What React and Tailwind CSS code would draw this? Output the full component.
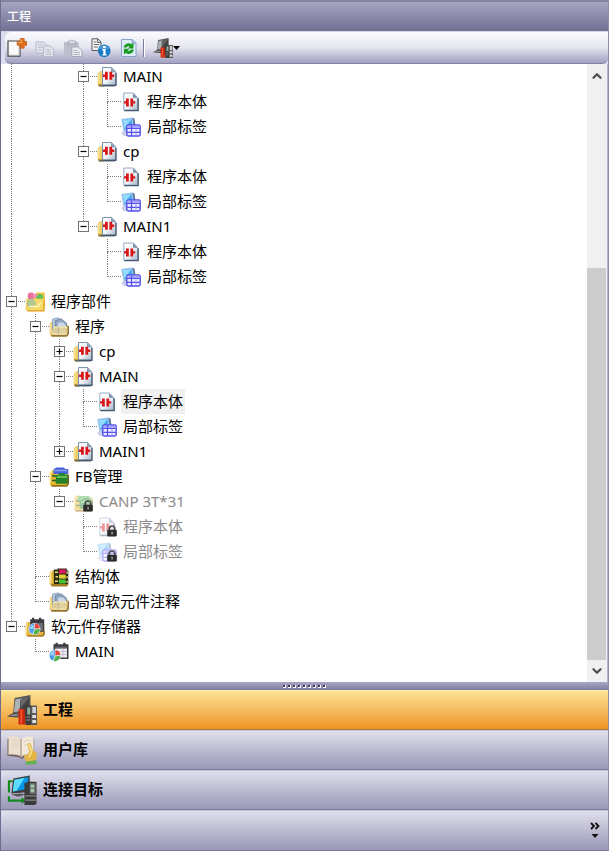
import { ChevronDown, ChevronUp } from "lucide-react";

/* ---------- Icons ---------- */

const Svg = ({ size = "size-5", box = "0 0 20 20", children }) => (
  <svg viewBox={box} className={`${size} shrink-0`} fill="none" aria-hidden="true">
    {children}
  </svg>
);

const Contact = () => (
  <>
    <path d="M0 2.800h2V0h2.800v8H2V5.200H0z" fill="#d81818" />
    <path d="M11.200 2.800h-2V0H6.400v8h2.800V5.200h2z" fill="#d81818" />
  </>
);

const Lock = () => (
  <g>
    <path d="M12.2 13.500v-1.700a2.800 2.800 0 0 1 5.600 0v1.700" stroke="#4a4a4a" strokeWidth="1.600" />
    <rect x="10.200" y="12.800" width="9.600" height="6.700" rx="1.200" fill="#2b2b2b" />
    <path d="M14.200 14.800h1.800v2.600h-1.800z" fill="#8b8b8b" />
  </g>
);

const PageShade = ({ id }) => (
  <defs>
    <linearGradient id={id} x1="0" y1="0" x2="1" y2="1">
      <stop offset="0" stopColor="#ffffff" />
      <stop offset=".55" stopColor="#eef3f8" />
      <stop offset="1" stopColor="#a3b4c6" />
    </linearGradient>
  </defs>
);

const PouIcon = () => (
  <Svg>
    <PageShade id="pou-page" />
    <path d="M1 18.500V7l2-2.500h4V19.500H2z" fill="#c4922a" />
    <path d="M.6 17V7.600L2.600 4.800h3.200v12.400z" fill="#f2cf69" />
    <path d="M1.800 16.500V8l1.300-1.800" stroke="#fbeaa8" />
    <path d="M2 18h17l-1.500 1.600H2.500z" fill="#5f6c74" />
    <path d="M5.500.5h9L18.800 5v13H5.500z" fill="url(#pou-page)" stroke="#6f88a2" strokeWidth=".9" />
    <path d="M14 .6V5.200h4.600z" fill="#8ba0b6" />
    <path d="M6 18.300h13V6" stroke="#43566b" strokeWidth="1.200" />
    <g transform="translate(6 4.800)">
      <Contact />
    </g>
  </Svg>
);

const BodyIcon = ({ locked }) => (
  <Svg>
    <PageShade id="body-page" />
    <g opacity={locked ? 0.45 : 1}>
      <path d="M2.800 1h9.800l4 4.500V18H2.800z" fill="url(#body-page)" stroke="#8ba3bd" strokeWidth=".9" />
      <path d="M12 1.200v4.600h4.600z" fill="#7990a8" />
      <path d="M3.200 18.600h14V6.200" stroke="#44586f" strokeWidth="1.300" />
      <g transform="translate(3 6.400)">
        <Contact />
      </g>
    </g>
    {locked && <Lock />}
  </Svg>
);

const LabelIcon = ({ locked }) => (
  <Svg>
    <g opacity={locked ? 0.45 : 1}>
      <path d="M.3 2 11 .4l2.300 1.400L14.500 10l-10 4.500-2 .5z" fill="#9cc3ee" />
      <path d="m11.400.6 2 1.200L14.600 9h-1.800z" fill="#5d7398" />
      <path d="M1.800 3.200 10.300 2l1.400 7.800-8 2.400z" fill="#45a8ee" />
      <path d="M1.800 3.200 10.300 2 3.600 11.600z" fill="#93dcfb" />
      <path d="M.6 16 4 13.600l2.600 4.600-3.800.2z" fill="#ccd2ea" stroke="#a4add0" strokeWidth=".5" />
      <rect x="5.800" y="8" width="13.400" height="11" rx="1.400" fill="#ecebff" stroke="#5350ee" strokeWidth="1.400" />
      <path d="M6.600 8.700h11.800v2.300H6.600z" fill="#a9a7fb" />
      <path d="M6 11.500h13M6 15.300h13" stroke="#5350ee" strokeWidth="1.200" />
      <path d="M10.500 8.500V19" stroke="#5350ee" strokeWidth="1.200" />
      <path d="M15 11.500V19" stroke="#8d8bf5" strokeWidth=".8" />
    </g>
    {locked && <Lock />}
  </Svg>
);

const PartsIcon = () => (
  <Svg>
    <path d="M11 .5h8.800v13H11z" fill="#f6c443" />
    <path d="M.6 17.500 1.600 6.500h7.400l1.500-2h9.300L19.300 18.800H2z" fill="#efc63e" />
    <circle cx="6" cy="4" r="3.400" fill="#e8709a" />
    <circle cx="10.300" cy="3.800" r="2.400" fill="#ee94b2" />
    <path d="m11 5 3-3.500 4 1.500.5 4-4.500 2.500z" fill="#62bf5c" />
    <path d="M1 8.500h8.500l1.400-1.700h8.300L18.500 19H2.300z" fill="#f7d968" />
    <circle cx="6.200" cy="11.300" r="4.600" fill="#a5c49b" opacity=".85" />
    <path d="M4 14.500h9l3-4" stroke="#fff3b8" strokeWidth="1.400" />
    <path d="M2.300 18.800h16.500L19.500 8" stroke="#e09c1c" strokeWidth="1.200" />
  </Svg>
);

const FilesIcon = () => (
  <Svg>
    <path d="M.8 17V6.800L2.600 4.800H5l1.200 3h12.600V18l-1.500 1.500H2.500z" fill="#c99a35" />
    <path d="M1 17V7l1.800-2H4v13z" fill="#f4d885" />
    <path d="M3.500 2.200 9 .8l3.800 3v12H3.500z" fill="#b9cade" stroke="#8297b2" strokeWidth=".8" />
    <path d="M6.400 3.600 12 1.800l5.400 4.200v10.500h-11z" fill="#91a6c0" stroke="#6a81a0" strokeWidth=".8" />
    <path d="M9 5.500h5l3 3v8H9z" fill="#cbd9e8" />
    <path d="M2 18 4.600 9.500H19L18 18.400z" fill="#e3cf94" opacity=".9" />
    <path d="M5.300 10.200h13M4.200 17h12.500" stroke="#f8edbd" />
    <path d="M9.500 10.500V17" stroke="#b8b69a" />
    <path d="M2.500 18.900h15.300l1.500-2V9" stroke="#806428" strokeWidth="1.200" />
  </Svg>
);

const FbIcon = ({ locked }) => (
  <Svg>
    <g opacity={locked ? 0.45 : 1}>
      <path d="M.8 17V6l2-2.500h3L7.500 5.500h11.700v12.300l-1.600 1.700H2.500z" fill="#e5b52c" />
      <path d="M1.400 16V6.500l1.800-2" stroke="#fbe797" strokeWidth="1.400" />
      {locked ? (
        <path d="M5 4h11l1.500 2v3H5z" fill="#4cb552" />
      ) : (
        <>
          <path d="M4.500 2.200 7.500.4h7.300l1.500 1.600h3V7H4.500z" fill="#4864dc" />
          <path d="M5.500 2.800h12.500v1.400H5.500z" fill="#8aa2f4" />
        </>
      )}
      <path d="M3 9h6M3 13.500h6" stroke="#1e5f2c" strokeWidth="1.500" />
      <path d="M6.800 8h2.400l1.300-1.800h5l1 1.500h3v8l-2 1H6.800z" fill="#23822a" />
      <path d="M8 8.800h10.300v2.200H8z" fill="#63bd54" />
      <path d="M2.500 18.900h15.300l1.500-2V8" stroke="#6d5613" strokeWidth="1.200" />
    </g>
    {locked && <Lock />}
  </Svg>
);

const StructIcon = () => (
  <Svg>
    <path d="M.6 17V5.500l2-2h3v15H2.500z" fill="#e9bb3c" />
    <path d="M1.600 16V6l1.400-1.400" stroke="#fbe797" strokeWidth="1.200" />
    <path d="M2 17h17.200v1l-1.400 1.500H2.500z" fill="#a17b1f" />
    <path d="M4.800 2.500h3.800V1.600h9.200v1.800h1.500V17H4.800z" fill="#2d2b12" />
    <path d="M10 2.400h6.800V6.600H10z" fill="#d91a5e" />
    <path d="M10 7.600h6.800v4H10z" fill="#ded43a" />
    <path d="M10 12.500h6.800v4H10z" fill="#43c433" />
    <path d="M6 4.400h3v1.500H6zM6.500 9h2.500v1.400H6.500zM6 13.600h3v1.500H6zM17.500 4.600h1.300v2.200h-1.300zM17.500 9h1.300v2.200h-1.300zM17.500 14h1.300v1.800h-1.300z" fill="#e9e27c" />
  </Svg>
);

const Pie = () => (
  <>
    <circle cx="6" cy="6" r="6" fill="#e8eef8" />
    <path d="M5.800 6V.6A5.400 5.400 0 0 0 4 11z" fill="#4b9be8" />
    <path d="M5 6V1.400A4.600 4.600 0 0 0 1.500 6z" fill="#9bd2fa" />
    <path d="M6.400 5.800V.6a5.300 5.300 0 0 1 5 4.500z" fill="#ea4636" />
    <path d="m6.200 6.800 5.200-1a5.400 5.400 0 0 1-6.600 5.600z" fill="#4fb54a" />
  </>
);

const MemoryIcon = () => (
  <Svg>
    <path d="M.6 18V7l2-2h3.700l1 2h12v11l-1.500 1.500H2.500z" fill="#e3b23f" />
    <path d="M1.500 17V8l1.500-1.700" stroke="#fbe797" strokeWidth="1.200" />
    <path d="M7 .8h2.200v1.400H14V.8h2.200v1.400h3v12.600H5.200V2.200H7z" fill="#3a3c42" />
    <path d="M7 6h11v8H7z" fill="#686b73" />
    <path d="M2.500 19h15.300l1.400-1.800V14" stroke="#86651d" strokeWidth="1.200" />
    <g transform="translate(3.500 6)">
      <Pie />
    </g>
  </Svg>
);

const MemoryFileIcon = () => (
  <Svg>
    <path d="M6.500.8h2.200v1.400h5.600V.8h2.200v1.400h3V17H4.500V2.200h2z" fill="#3a3c42" />
    <path d="M6.200 6.500H18v9H6.200z" fill="#f1ecf2" />
    <path d="M6.200 9.500H18M6.200 12.500H18M14 6.500v9" stroke="#b4adbc" strokeWidth=".7" />
    <path d="M6.200 5.200H18" stroke="#74777f" />
    <g transform="translate(0 7.600)">
      <Pie />
    </g>
  </Svg>
);

const NewIcon = () => (
  <Svg>
    <path d="M1 3h12v15.200H1z" fill="#fafafa" stroke="#4b4b4b" strokeWidth="1.200" />
    <path d="M2 17.300h10.200V9" stroke="#b0b0b0" />
    <path d="M13.200.5h4v3H20v3.700h-2.800v3h-4v-3h-3V3.500h3z" fill="#e2711d" stroke="#c65008" strokeWidth=".7" />
    <path d="M14.300 1.500v3h-3" stroke="#ffb35b" />
  </Svg>
);

const CopyIcon = () => (
  <Svg>
    <g fill="#e3e3ec" stroke="#b3b3c4" strokeWidth=".9">
      <path d="M1 4h7.500l3 3v8H1z" />
      <path d="M8.500 8H15l3.600 3.400v7.100H8.500z" />
    </g>
    <path d="M3 7h5M3 9.500h4.500M3 12h4M10.500 12h5M10.500 14.300h6M10.500 16.500h6" stroke="#bcbccb" />
  </Svg>
);

const PasteIcon = () => (
  <Svg>
    <path d="M1 4h14.500v14H1z" fill="#bdbdcb" />
    <path d="M5 5.800V3.200h2a2 2 0 0 1 3.600 0h2v2.600z" fill="#dcdce5" stroke="#9c9cb0" strokeWidth=".8" />
    <path d="M8.800 9h6.400l3.800 3.300v6.200H8.800z" fill="#ececf3" stroke="#a4a4b8" strokeWidth=".9" />
    <path d="M10.500 12.500h4.200M10.500 14.500h6.500M10.500 16.600h6.500" stroke="#b3b3c4" />
  </Svg>
);

const InfoIcon = () => (
  <Svg>
    <path d="M1 .8h6L10 4v8.500H1z" fill="#f3f3f3" stroke="#5a5a5a" />
    <path d="M6.700.8v3.600H10" stroke="#5a5a5a" />
    <path d="M2.800 4h2.700M2.800 6.500h5.500M2.800 9h4" stroke="#6c6c6c" />
    <circle cx="13.200" cy="12.800" r="6.400" fill="#1b7bc4" />
    <path d="M8 11a5.500 5.500 0 0 1 10.400 0z" fill="#4a9bd8" />
    <path d="M12 8h2.600v2H12zM11.400 11h3.200v5.200h1v1.300h-4.200v-1.300h.9v-3.800h-.9z" fill="#fff" />
  </Svg>
);

const RefreshIcon = () => (
  <Svg>
    <path d="M2.500 1.500h10.700L17 5v13.500H2.500z" fill="#dfebf8" stroke="#86a4cc" />
    <path d="M13 1.800v3.400h3.800" fill="#b9cde8" stroke="#86a4cc" />
    <path d="M4.600 9.600a5 5 0 0 1 7.900-3.400L14.500 4.800v5.600H9l1.700-1.900a2.500 2.500 0 0 0-3.200 1.100z" fill="#1b9a21" />
    <path d="M14.800 11.600a5 5 0 0 1-7.900 3.400L4.900 16.400v-5.600h5.500l-1.700 1.900a2.500 2.500 0 0 0 3.200-1.100z" fill="#1b9a21" />
  </Svg>
);

const DeviceIcon = ({ size = "size-5" }) => (
  <Svg size={size} box="0 0 30 30">
    <path d="M7.500 3 23.500 0v17L6 19z" fill="#5a5a5a" />
    <path d="M8.500 4.400 15 3.200l-2 13-6.200.8z" fill="#aeb2b6" />
    <path d="M13.500 4.200 22.300 2.200V14l-9.800 3z" fill="#444" />
    <path d="m14 4.200 8.200-2L13.500 13z" fill="#686868" />
    <path d="m0 21.500 6-3.500 8 .5v3.500L9 22.500z" fill="#484848" />
    <path d="m2.500 21 4-2 6.500.3-3.600 2z" fill="#8b8b8b" />
    <path d="M11.500 14h6.800v15.500h-6.800z" fill="#d0260c" />
    <path d="M13.500 14.500h1.600v14h-1.600z" fill="#ee5a38" />
    <path d="m17.500 12 2-1.500h4.700V30h-5.700z" fill="#3c3c3c" />
    <path d="M20.200 12.500h3v7h-3z" fill="#8fae98" />
    <path d="M24 10.500h6V30h-6z" fill="#5a5a5a" />
    <path d="M25.300 12H29v6h-3.700z" fill="#d2d2d2" />
    <path d="M25.300 20H29v3h-3.700zM25.300 25H29v3h-3.700z" fill="#e1e1e1" />
    <path d="M19.500 22h3.500M19.500 25h3.500" stroke="#999" />
  </Svg>
);

const LibraryIcon = () => (
  <Svg size="size-[30px]" box="0 0 31 31">
    <path d="M.5 4.500 3 3v17l10 1.500 2 2 2-2 10-1V3l1 1v18l-10 1-3 2-2-2L.5 21.500z" fill="#75604f" />
    <path d="M1.500 2c5-2 9.500-1 13 2.500V22C11 19.500 7 19 1.500 20.500z" fill="#ecdfd0" />
    <path d="M14.500 4.500C18 1 23 .5 27.500 2v18.500c-5-1.500-8.500-1-13 1.500z" fill="#f3e8dc" />
    <path d="M14.500 4.500V22" stroke="#b39d88" strokeWidth="1.400" />
    <path d="M5 6c2.500-.8 5-.5 7 .5M5 9.500c2.500-.8 5-.5 7 .5M5 13c2.500-.8 5-.5 7 .5M17.500 7c2-1.200 4-1.500 7-1M17.500 11c2-1.200 3-1.500 4-1" stroke="#dccdbd" />
    <path d="M21 9.500c1-1.800 3.500-1.500 4 .5l1.500 5.500 4 2.500.3 6-3.500 4h-7L18 24l-.8-3.500 3 .5L23 17.500z" fill="#e3b646" />
    <path d="m22.500 9.500 3 7.500-2.700 6" stroke="#fae08b" strokeWidth="1.800" />
    <path d="M19.500 27.500 30.500 26v4l-11 .8z" fill="#63b04e" />
  </Svg>
);

const ConnectionIcon = () => (
  <Svg size="size-[30px]" box="0 0 31 31">
    <path d="M6 6.500H2V18" stroke="#158a20" strokeWidth="2.200" />
    <path d="M2 22v4.500h16" stroke="#158a20" strokeWidth="2.200" />
    <path d="m15 22.500 4.500 4-4.500 3.500z" fill="#158a20" />
    <path d="M6.500 3.500 23.500.5v17L4.500 19z" fill="#3d3d3d" />
    <path d="m7.600 4.800 14.600-2.700L21 14.500 6 17z" fill="#0797ed" />
    <path d="M7.600 4.800 18 3l-8 13.400-4 .6z" fill="#5cdcff" />
    <path d="m4 20.500 9-1.500 7 1-8 2.500z" fill="#575757" />
    <path d="m18 8.500 4-1.500h8.500v22.500L29 31H18z" fill="#3a3a3a" />
    <path d="M23.500 8.500h6v11h-6z" fill="#777" />
    <path d="M24.500 10H28v3h-3.500zM24.500 14.500H28v3h-3.500z" fill="#9ccfaa" />
    <path d="M19 21.500h11M19 26h11" stroke="#868686" strokeWidth="1.200" />
  </Svg>
);

/* ---------- Project tree ---------- */

const pouUnit = (name) => ({
  name,
  icon: PouIcon,
  open: true,
  children: [
    { name: "程序本体", icon: BodyIcon },
    { name: "局部标签", icon: LabelIcon },
  ],
});

const execution = [pouUnit("MAIN"), pouUnit("cp"), pouUnit("MAIN1")];

const project = [
  {
    name: "程序部件",
    icon: PartsIcon,
    open: true,
    children: [
      {
        name: "程序",
        icon: FilesIcon,
        open: true,
        children: [
          { name: "cp", icon: PouIcon, open: false },
          {
            name: "MAIN",
            icon: PouIcon,
            open: true,
            children: [
              { name: "程序本体", icon: BodyIcon, selected: true },
              { name: "局部标签", icon: LabelIcon },
            ],
          },
          { name: "MAIN1", icon: PouIcon, open: false },
        ],
      },
      {
        name: "FB管理",
        icon: FbIcon,
        open: true,
        children: [
          {
            name: "CANP 3T*31",
            icon: FbIcon,
            open: true,
            locked: true,
            children: [
              { name: "程序本体", icon: BodyIcon, locked: true },
              { name: "局部标签", icon: LabelIcon, locked: true },
            ],
          },
        ],
      },
      { name: "结构体", icon: StructIcon },
      { name: "局部软元件注释", icon: FilesIcon },
    ],
  },
  {
    name: "软元件存储器",
    icon: MemoryIcon,
    open: true,
    children: [{ name: "MAIN", icon: MemoryFileIcon }],
  },
];

const Guide = ({ line }) => (
  <span className="grid w-6 shrink-0 grid-cols-[10px_14px] self-stretch">
    {line && <span className="col-start-2 border-l border-dotted border-[#808080]" />}
  </span>
);

const Joint = ({ node, last }) => (
  <span className="grid w-6 shrink-0 grid-cols-[10px_14px] grid-rows-2 self-stretch">
    <span className="col-start-2 row-start-1 border-b border-l border-dotted border-[#808080]" />
    {!last && <span className="col-start-2 row-start-2 border-l border-dotted border-[#808080]" />}
    {node.open !== undefined && (
      <button
        aria-label={node.open ? "Collapse" : "Expand"}
        className="col-span-2 col-start-1 row-span-2 row-start-1 ml-[5px] grid size-[11px] place-items-center self-center justify-self-start border border-[#747474] bg-white"
      >
        <svg viewBox="0 0 9 9" className="size-[9px]" stroke="#000" strokeWidth="1.200" aria-hidden="true">
          <path d={node.open ? "M1.500 4.500h6" : "M1.500 4.500h6M4.500 1.500v6"} />
        </svg>
      </button>
    )}
  </span>
);

// guides: one flag per ancestor column, true where its line carries on below
const TreeNode = ({ node, guides, last }) => {
  const Icon = node.icon;
  return (
    <li>
      <div className="flex h-[25px] items-center">
        {guides.map((line, i) => (
          <Guide key={i} line={line} />
        ))}
        <Joint node={node} last={last} />
        <Icon locked={node.locked} />
        <span
          className={`ml-1 flex h-full items-center whitespace-nowrap px-0.5 pb-0.5 ${
            node.selected ? "bg-[#f0f0f0]" : ""
          } ${node.locked ? "text-[#8a8a8a]" : "text-black"}`}
        >
          {node.name}
        </span>
      </div>
      {node.children && <Branch nodes={node.children} guides={[...guides, !last]} />}
    </li>
  );
};

const Branch = ({ nodes, guides }) => (
  <ul>
    {nodes.map((node, i) => (
      <TreeNode key={i} node={node} guides={guides} last={i === nodes.length - 1} />
    ))}
  </ul>
);

const ScrollBar = () => (
  <div className="flex w-5 shrink-0 flex-col bg-[#f0f0f0] text-[#505050]">
    <button aria-label="Scroll up" className="flex h-6 items-center justify-center">
      <ChevronUp size={14} strokeWidth={4} />
    </button>
    <div className="grow-[180]" />
    <div className="mr-px grow-[393] bg-[#cdcdcd]" />
    <button aria-label="Scroll down" className="flex h-[22px] items-center justify-center">
      <ChevronDown size={14} strokeWidth={4} />
    </button>
  </div>
);

/* ---------- Panel ---------- */

const tools = [
  { label: "New", icon: NewIcon },
  { label: "Copy", icon: CopyIcon, disabled: true },
  { label: "Paste", icon: PasteIcon, disabled: true },
  { label: "Properties", icon: InfoIcon },
  { label: "Refresh", icon: RefreshIcon },
];

const Toolbar = () => (
  <div className="bg-[#dcdcee]">
    <div className="ml-1 flex h-8 items-center gap-2 rounded-l-md rounded-br-md border-b border-[#8583a4] bg-linear-to-b from-[#fbfbff] via-[#e4e4f0] to-[#a3a1c1] pl-0.5">
      {tools.map(({ label, icon: Icon, disabled }) => (
        <button key={label} aria-label={label} disabled={disabled}>
          <Icon />
        </button>
      ))}
      <span className="-ml-1 h-[18px] w-0.5 border-l border-r border-l-[#7e7c9e] border-r-white" />
      <button aria-label="Display target" className="flex items-center">
        <DeviceIcon />
        <svg viewBox="0 0 7 4" className="h-1 w-[7px]" aria-hidden="true">
          <path d="M0 0h7L3.500 4z" fill="#000" />
        </svg>
      </button>
    </div>
  </div>
);

const views = [
  { label: "工程", icon: () => <DeviceIcon size="size-[30px]" />, active: true },
  { label: "用户库", icon: LibraryIcon },
  { label: "连接目标", icon: ConnectionIcon },
];

const App = () => {
  return (
    <div className="flex min-h-screen flex-col border-x border-l-[#6d6b8e] border-r-[#8e8cae] bg-white font-['Noto_Sans','Noto_Sans_CJK_SC',sans-serif] text-[15px] leading-5">
      {/* Title */}
      <h1 className="flex h-8 items-center border-t-2 border-b border-t-[#8583a2] border-b-[#d5d4e6] bg-linear-to-b from-[#a6a5c2] to-[#737092] pl-1.5 text-xs font-medium text-white">
        工程
      </h1>

      <Toolbar />

      {/* Tree */}
      <div className="flex grow border-r border-[#b5b3cd]">
        <nav className="min-w-0 grow overflow-hidden pb-4" aria-label="工程">
          <Branch nodes={execution} guides={[true, false, false]} />
          <Branch nodes={project} guides={[]} />
        </nav>
        <ScrollBar />
      </div>

      {/* Splitter */}
      <div className="flex h-2 items-center justify-center gap-0.5 bg-linear-to-b from-[#a9a7c4] to-[#7f7d9d]">
        {Array.from({ length: 9 }, (_, i) => (
          <span key={i} className="size-[3px] border-r border-b border-white bg-[#3b3a5c]" />
        ))}
      </div>

      {/* View switcher */}
      {views.map(({ label, icon: Icon, active }) => (
        <button
          key={label}
          className={`flex h-10 items-center gap-1.5 border-t border-b pl-1.5 text-left font-bold text-black ${
            active
              ? "border-t-[#fbe9b0] border-b-[#a87a44] bg-linear-to-b from-[#fbe291] to-[#ee951b]"
              : "border-t-[#c5c4d8] border-b-[#7c7a9b] bg-linear-to-b from-[#e0e0ec] to-[#9a97b8]"
          }`}
        >
          <Icon />
          <span className="pb-0.5">{label}</span>
        </button>
      ))}
      <div className="flex h-[41px] items-center justify-end border-t border-b border-t-[#c5c4d8] border-b-[#7c7a9b] bg-linear-to-b from-[#e0e0ec] to-[#9a97b8] pr-2">
        <button aria-label="Configure buttons">
          <svg viewBox="0 0 10 17" className="h-[17px] w-2.5" fill="none" aria-hidden="true">
            <path d="m1 1 3 3-3 3M5.500 1l3 3-3 3" stroke="#111" strokeWidth="1.800" />
            <path d="M1.500 12h7L5 16z" fill="#111" />
          </svg>
        </button>
      </div>
    </div>
  );
};

export default App;
